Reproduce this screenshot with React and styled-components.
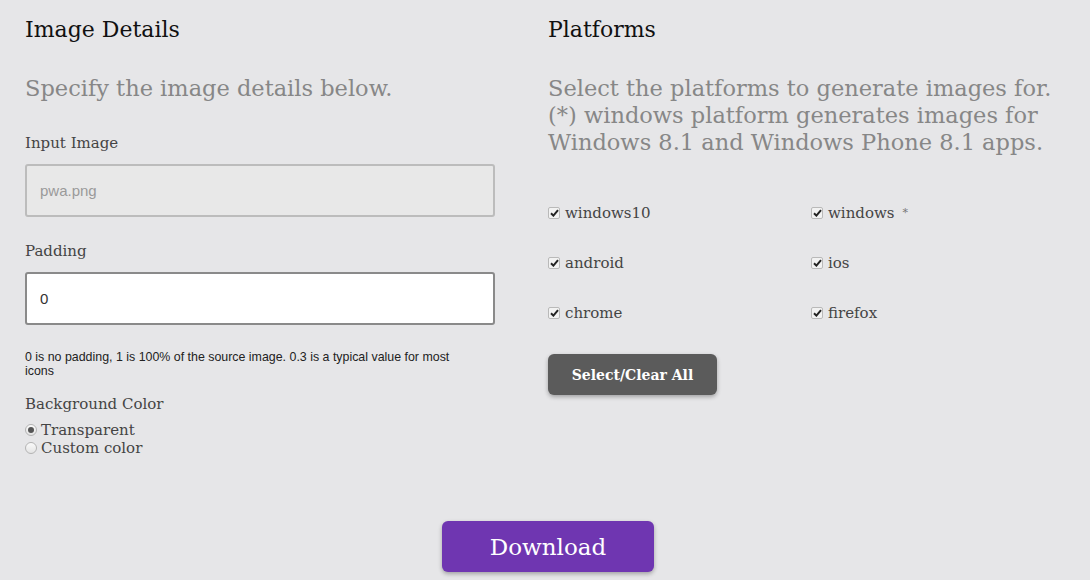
import React, { useState } from 'react';
import styled, { createGlobalStyle } from 'styled-components';

const GlobalStyle = createGlobalStyle`
	html, body {
		margin: 0;
		padding: 0;
		background: #e6e6e8;
	}
	body {
		font-family: 'DejaVu Serif', 'Liberation Serif', serif;
		color: #333;
	}
	* {
		box-sizing: border-box;
	}
`;

const Page = styled.div`
	width: 1090px;
	height: 580px;
	overflow: hidden;
	padding: 0 25px;
`;

const Columns = styled.div`
	display: grid;
	grid-template-columns: 523px 1fr;
`;

const Column = styled.section`
	display: flex;
	flex-direction: column;
	align-items: flex-start;
`;

const Title = styled.h2`
	margin: 15px 0 0;
	font-size: 22px;
	font-weight: 400;
	line-height: 30px;
	color: #111;
`;

const Lead = styled.p`
	margin: 30px 0 0;
	font-size: 22.5px;
	line-height: 27px;
	color: #878787;
`;

const Label = styled.label`
	margin-top: ${(p) => p.$top || 0}px;
	font-size: 15px;
	line-height: 20px;
	color: #444;
`;

const TextInput = styled.input`
	margin-top: ${(p) => p.$top || 0}px;
	width: 470px;
	height: 53px;
	padding: 0 13px;
	border: 2px solid ${(p) => (p.disabled ? '#bcbcbc' : '#8a8a8a')};
	border-radius: 3px;
	background: ${(p) => (p.disabled ? '#e8e8e8' : '#fff')};
	font-family: 'Liberation Sans', Arial, sans-serif;
	font-size: 15px;
	color: ${(p) => (p.disabled ? '#9a9a9a' : '#333')};
	outline: none;

	&::placeholder {
		color: #9a9a9a;
	}
`;

const Help = styled.p`
	margin: 25px 0 0;
	width: 445px;
	font-family: 'Liberation Sans', Arial, sans-serif;
	font-size: 12.4px;
	line-height: 14px;
	color: #222;
`;

const RadioList = styled.div`
	margin-top: 7px;
	display: flex;
	flex-direction: column;
`;

const RadioRow = styled.label`
	display: flex;
	align-items: center;
	gap: 4px;
	font-size: 15px;
	line-height: 18px;
	color: #444;
	cursor: pointer;
`;

const RadioDot = styled.span`
	position: relative;
	width: 12px;
	height: 12px;
	border-radius: 50%;
	border: 1px solid #b4b4b4;
	background: linear-gradient(#fafafa, #e4e4e4);
	flex: none;

	&::after {
		content: '';
		display: ${(p) => (p.$checked ? 'block' : 'none')};
		position: absolute;
		top: 2px;
		left: 2px;
		width: 6px;
		height: 6px;
		border-radius: 50%;
		background: #555;
	}
`;

const CheckGrid = styled.div`
	margin-top: 47px;
	display: grid;
	grid-template-columns: 263px 263px;
	row-gap: 30px;
`;

const CheckRow = styled.label`
	display: flex;
	align-items: center;
	gap: 5px;
	font-size: 15px;
	line-height: 20px;
	color: #444;
	cursor: pointer;

	sup {
		font-size: 11px;
		color: #777;
		margin-left: 3px;
		vertical-align: 4px;
	}
`;

const CheckBox = styled.span`
	display: flex;
	align-items: center;
	justify-content: center;
	width: 12px;
	height: 12px;
	border: 1px solid #b9b9b9;
	border-radius: 2px;
	background: #f2f2f2;
	flex: none;
`;

const Button = styled.button`
	border: none;
	border-radius: 6px;
	color: #fff;
	font-family: 'DejaVu Serif', 'Liberation Serif', serif;
	box-shadow: 0 2px 4px rgba(0, 0, 0, 0.3);
	cursor: pointer;
`;

const SelectButton = styled(Button)`
	margin-top: 31px;
	width: 169px;
	height: 41px;
	background: #5b5b5b;
	font-size: 14px;
	font-weight: 700;
`;

const Footer = styled.div`
	display: flex;
	justify-content: center;
	padding-left: 6px;
	margin-top: 64px;
`;

const DownloadButton = styled(Button)`
	width: 212px;
	height: 51px;
	background: #6f36b1;
	font-size: 23px;
`;

const platforms = [
	{ id: 'windows10', label: 'windows10' },
	{ id: 'windows', label: 'windows', star: true },
	{ id: 'android', label: 'android' },
	{ id: 'ios', label: 'ios' },
	{ id: 'chrome', label: 'chrome' },
	{ id: 'firefox', label: 'firefox' },
];

const Check = ({ on }) => (
	<CheckBox>
		{on && (
			<svg width="9" height="8" viewBox="0 0 9 8">
				<path d="M1 4.2 L3.4 6.6 L8 1.2" fill="none" stroke="#222" strokeWidth="2" />
			</svg>
		)}
	</CheckBox>
);

const App = () => {
	const [checked, setChecked] = useState(platforms.map(() => true));
	const [bg, setBg] = useState('transparent');

	const toggleAll = () => {
		const all = checked.every(Boolean);
		setChecked(platforms.map(() => !all));
	};

	return (
		<Page>
			<GlobalStyle />
			<Columns>
				<Column>
					<Title>Image Details</Title>
					<Lead>Specify the image details below.</Lead>
					<Label $top={31}>Input Image</Label>
					<TextInput $top={11} disabled placeholder="pwa.png" />
					<Label $top={24}>Padding</Label>
					<TextInput $top={11} defaultValue="0" />
					<Help>0 is no padding, 1 is 100% of the source image. 0.3 is a typical value for most icons</Help>
					<Label $top={16}>Background Color</Label>
					<RadioList>
						<RadioRow onClick={() => setBg('transparent')}>
							<RadioDot $checked={bg === 'transparent'} />
							Transparent
						</RadioRow>
						<RadioRow onClick={() => setBg('custom')}>
							<RadioDot $checked={bg === 'custom'} />
							Custom color
						</RadioRow>
					</RadioList>
				</Column>
				<Column>
					<Title>Platforms</Title>
					<Lead>
						Select the platforms to generate images for.
						<br />
						(*) windows platform generates images for
						<br />
						Windows 8.1 and Windows Phone 8.1 apps.
					</Lead>
					<CheckGrid>
						{platforms.map((p, i) => (
							<CheckRow
								key={p.id}
								onClick={() => setChecked(checked.map((c, j) => (j === i ? !c : c)))}
							>
								<Check on={checked[i]} />
								{p.label}
								{p.star && <sup>*</sup>}
							</CheckRow>
						))}
					</CheckGrid>
					<SelectButton onClick={toggleAll}>Select/Clear All</SelectButton>
				</Column>
			</Columns>
			<Footer>
				<DownloadButton>Download</DownloadButton>
			</Footer>
		</Page>
	);
};

export default App;
